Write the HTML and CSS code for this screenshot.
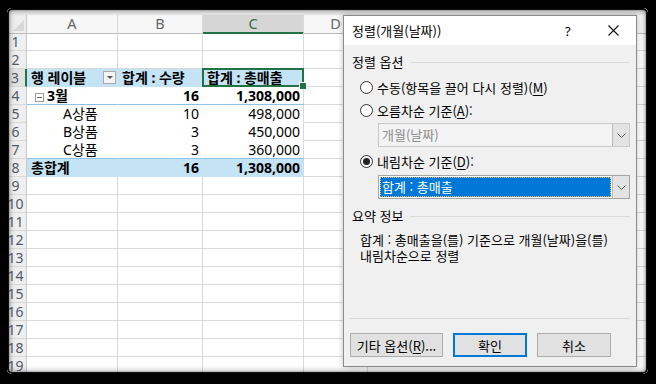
FILE: index.html
```html
<!DOCTYPE html>
<html lang="ko">
<head>
    <meta charset="UTF-8">
    <title>정렬(개월(날짜))</title>
    <link rel="stylesheet" href="styles.css">
</head>
<body>
    <div class="frame">
        <div class="sheet">
            <div class="ribbon-edge"></div>
            <div class="row col-heads">
                <div class="corner"><span class="corner-tri"></span></div>
                <div class="ch">A</div>
                <div class="ch">B</div>
                <div class="ch active">C</div>
                <div class="ch">D</div>
                <div class="ch">E</div>
            </div>
            <div class="row"><div class="rh">1</div><div></div><div></div><div></div><div></div><div></div></div>
            <div class="row"><div class="rh">2</div><div></div><div></div><div></div><div></div><div></div></div>
            <!-- pivot header -->
            <div class="row">
                <div class="rh sel">3</div>
                <div class="pv fill b label-cell">행 레이블<span class="filter-btn"><span class="filter-tri"></span></span></div>
                <div class="pv fill b">합계 : 수량</div>
                <div class="pv fill b last active-cell">합계 : 총매출</div>
                <div></div><div></div>
            </div>
            <div class="row">
                <div class="rh">4</div>
                <div class="pv line b"><span class="collapse-box"></span>3월</div>
                <div class="pv line b num">16</div>
                <div class="pv line b num last">1,308,000</div>
                <div></div><div></div>
            </div>
            <div class="row">
                <div class="rh">5</div>
                <div class="pv item">A상품</div>
                <div class="pv num">10</div>
                <div class="pv num last">498,000</div>
                <div></div><div></div>
            </div>
            <div class="row">
                <div class="rh">6</div>
                <div class="pv item">B상품</div>
                <div class="pv num">3</div>
                <div class="pv num last">450,000</div>
                <div></div><div></div>
            </div>
            <div class="row">
                <div class="rh">7</div>
                <div class="pv line item">C상품</div>
                <div class="pv line num">3</div>
                <div class="pv line num last">360,000</div>
                <div></div><div></div>
            </div>
            <div class="row">
                <div class="rh">8</div>
                <div class="pv fill b">총합계</div>
                <div class="pv fill b num">16</div>
                <div class="pv fill b num last">1,308,000</div>
                <div></div><div></div>
            </div>
            <div class="row"><div class="rh">9</div><div></div><div></div><div></div><div></div><div></div></div>
            <div class="row"><div class="rh">10</div><div></div><div></div><div></div><div></div><div></div></div>
            <div class="row"><div class="rh">11</div><div></div><div></div><div></div><div></div><div></div></div>
            <div class="row"><div class="rh">12</div><div></div><div></div><div></div><div></div><div></div></div>
            <div class="row"><div class="rh">13</div><div></div><div></div><div></div><div></div><div></div></div>
            <div class="row"><div class="rh">14</div><div></div><div></div><div></div><div></div><div></div></div>
            <div class="row"><div class="rh">15</div><div></div><div></div><div></div><div></div><div></div></div>
            <div class="row"><div class="rh">16</div><div></div><div></div><div></div><div></div><div></div></div>
            <div class="row"><div class="rh">17</div><div></div><div></div><div></div><div></div><div></div></div>
            <div class="row"><div class="rh">18</div><div></div><div></div><div></div><div></div><div></div></div>
            <div class="row"><div class="rh">19</div><div></div><div></div><div></div><div></div><div></div></div>
        </div>

        <!-- sort dialog -->
        <div class="dialog">
            <div class="dlg-title">
                <span class="dlg-caption">정렬(개월(날짜))</span>
                <span class="dlg-help">?</span>
                <span class="dlg-close">
                    <svg width="11" height="11" viewBox="0 0 11 11"><path d="M0.5 0.5L10.5 10.5M10.5 0.5L0.5 10.5" stroke="#111" stroke-width="1.1" fill="none"/></svg>
                </span>
            </div>
            <div class="dlg-body">
                <div class="group-label"><span>정렬 옵션</span><span class="group-line"></span></div>
                <div class="radio"><span class="radio-dot"></span>수동(항목을 끌어 다시 정렬)(<u>M</u>)</div>
                <div class="radio"><span class="radio-dot"></span>오름차순 기준(<u>A</u>):</div>
                <div class="combo disabled">
                    <span class="combo-text">개월(날짜)</span>
                    <span class="combo-btn"><svg width="9" height="5" viewBox="0 0 9 5"><path d="M0.5 0.5L4.5 4.5L8.5 0.5" stroke="#555" fill="none"/></svg></span>
                </div>
                <div class="radio r3"><span class="radio-dot checked"></span>내림차순 기준(<u>D</u>):</div>
                <div class="combo">
                    <span class="combo-text selected">합계 : 총매출</span>
                    <span class="combo-btn"><svg width="9" height="5" viewBox="0 0 9 5"><path d="M0.5 0.5L4.5 4.5L8.5 0.5" stroke="#555" fill="none"/></svg></span>
                </div>
                <div class="group-label g2"><span>요약 정보</span><span class="group-line"></span></div>
                <p class="summary">합계 : 총매출을(를) 기준으로 개월(날짜)을(를)</p>
                <p class="summary">내림차순으로 정렬</p>
                <div class="dlg-sep"></div>
                <div class="dlg-buttons">
                    <button class="btn wide">기타 옵션(<u>R</u>)...</button>
                    <button class="btn default">확인</button>
                    <button class="btn">취소</button>
                </div>
            </div>
        </div>
    </div>
</body>
</html>
```

FILE: styles.css
```css
* {
    box-sizing: border-box;
}

html, body {
    margin: 0;
    padding: 0;
}

body {
    background-color: #000;
    width: 656px;
    height: 384px;
    overflow: hidden;
    font-family: "Noto Sans", "Noto Sans CJK KR", sans-serif;
    color: #000;
}

/* torn screenshot edge */
.frame {
    position: relative;
    margin: 8px 0 0 7px;
    width: 641px;
    height: 366px;
    background-color: #fff;
    overflow: hidden;
    border-radius: 5px;
}

.frame::after {
    content: '';
    position: absolute;
    top: 0;
    left: 0;
    right: 0;
    bottom: 0;
    border-radius: 5px;
    box-shadow: inset 0 0 1px 2px #000, inset 0 0 5px 3px rgba(60, 60, 60, 0.45);
    pointer-events: none;
    z-index: 5;
}

/* spreadsheet */
.sheet {
    margin-left: -7px;
}

.ribbon-edge {
    height: 7px;
    background-color: #e9e9e9;
}

.row {
    display: grid;
    grid-template-columns: 27px 91px 85px 101px 64px 1fr;
    height: 18px;
}

.row > div {
    border-right: 1px solid #d9d9d9;
    border-bottom: 1px solid #d9d9d9;
    font-size: 14px;
    line-height: 17px;
    white-space: nowrap;
}

.col-heads > div {
    background-color: #f7f7f7;
    border-bottom-color: #bdbdbd;
    text-align: center;
    color: #666;
    font-size: 14.5px;
}

.col-heads .corner {
    position: relative;
    background-color: #efefef;
    border-right-color: #c8c8c8;
}

.corner-tri {
    position: absolute;
    right: 2px;
    bottom: 2px;
    border-left: 11px solid transparent;
    border-bottom: 11px solid #d7d7d7;
}

.col-heads .ch.active {
    background-color: #d6d6d6;
    border-bottom: 2px solid #217346;
    color: #3a6b50;
}

.row .rh {
    background-color: #efefef;
    border-right-color: #c8c8c8;
    padding-left: 5px;
    text-align: center;
    color: #4f5a6e;
    font-size: 14px;
}

.row .rh.sel {
    background-color: #e1e1e1;
    border-right: 2px solid #217346;
}

/* pivot table */
.row .pv {
    border-right-color: transparent;
    border-bottom-color: transparent;
    padding: 0 4px;
}

.row .pv.last {
    border-right-color: #d9d9d9;
    padding-right: 3px;
}

.row .pv.fill {
    background-color: #c4e3f4;
    border-bottom-color: #c4e3f4;
}

.row .pv.line {
    border-bottom-color: #8ec2e4;
}

.pv.b {
    font-weight: bold;
}

.pv.num {
    text-align: right;
    padding-right: 3px;
}

.pv.item {
    padding-left: 36px;
}

.row .label-cell {
    display: flex;
    align-items: center;
    padding-right: 1px;
}

.filter-btn {
    margin-left: auto;
    width: 13px;
    height: 13px;
    border: 1px solid #a9a9a9;
    background-color: #f4f4f4;
    display: flex;
    align-items: center;
    justify-content: center;
}

.filter-tri {
    border-left: 3px solid transparent;
    border-right: 3px solid transparent;
    border-top: 3px solid #555;
}

.collapse-box {
    display: inline-block;
    width: 9px;
    height: 9px;
    border: 1px solid #9a9a9a;
    margin: 0 3px 0 4px;
    vertical-align: -1px;
    background: linear-gradient(#666, #666) center / 5px 1px no-repeat;
}

.row .active-cell {
    position: relative;
    z-index: 1;
}

.active-cell::before {
    content: '';
    position: absolute;
    top: -1px;
    left: -1px;
    right: -1px;
    bottom: -1px;
    border: 2px solid #217346;
}

.active-cell::after {
    content: '';
    position: absolute;
    right: -4px;
    bottom: -4px;
    width: 6px;
    height: 6px;
    background-color: #217346;
    border: 1px solid #fff;
}

/* sort dialog */
.dialog {
    position: absolute;
    left: 336px;
    top: 7px;
    width: 294px;
    height: 352px;
    border: 1px solid #8c8c8c;
    background-color: #f0f0f0;
    box-shadow: 0 0 6px rgba(0, 0, 0, 0.25);
    z-index: 2;
    display: flex;
    flex-direction: column;
    font-family: "Noto Sans CJK KR", sans-serif;
    font-size: 13px;
}

.dlg-title {
    height: 29px;
    background-color: #fff;
    display: flex;
    align-items: center;
    padding-left: 8px;
}

.dlg-caption {
    flex: 1;
}

.dlg-help {
    width: 10px;
    margin-right: 33px;
    font-family: "Noto Sans", sans-serif;
    font-size: 13px;
}

.dlg-close {
    width: 11px;
    height: 11px;
    margin-right: 17px;
    display: flex;
}

.dlg-body {
    flex: 1;
    display: flex;
    flex-direction: column;
    padding: 9px 6px 9px 8px;
}

.group-label {
    display: flex;
    align-items: center;
    height: 16px;
    line-height: 16px;
    margin-bottom: 6px;
}

.group-label.g2 {
    margin-top: 9px;
    margin-bottom: 8px;
}

.group-line {
    flex: 1;
    margin-left: 7px;
    border-top: 1px solid #dadada;
}

.radio {
    height: 23px;
    display: flex;
    align-items: center;
    padding-left: 8px;
}

.radio.r3 {
    margin-top: 3px;
}

.radio u, .btn u {
    text-decoration: underline;
    text-underline-offset: 2px;
}

.radio-dot {
    width: 13px;
    height: 13px;
    border: 1px solid #333;
    border-radius: 50%;
    background-color: #fff;
    margin-right: 4px;
    display: flex;
    align-items: center;
    justify-content: center;
}

.radio-dot.checked::after {
    content: '';
    width: 7px;
    height: 7px;
    border-radius: 50%;
    background-color: #222;
}

.combo {
    margin: 1px 0 0 26px;
    height: 24px;
    border: 1px solid #a5a5a5;
    background-color: #fff;
    display: flex;
}

.combo + .radio {
    margin-top: 3px;
}

.combo.disabled {
    background-color: #f3f3f3;
    border-color: #c9c9c9;
    color: #8c8c8c;
}

.combo-text {
    flex: 1;
    line-height: 22px;
    padding-left: 3px;
}

.combo-text.selected {
    margin: 1px;
    line-height: 20px;
    padding-left: 2px;
    background-color: #0078d7;
    color: #fff;
    outline: 1px dotted #e9b86b;
    outline-offset: -1px;
}

.combo-btn {
    width: 17px;
    background-color: #e3e3e3;
    border-left: 1px solid #b9b9b9;
    display: flex;
    align-items: center;
    justify-content: center;
}

.combo:not(.disabled) {
    margin-top: 2px;
}

.summary {
    margin: 0;
    padding-left: 8px;
    height: 16px;
    line-height: 16px;
}

.dlg-sep {
    margin: auto 0 0 -2px;
    border-top: 1px solid #d8d8d8;
}

.dlg-buttons {
    display: flex;
    gap: 10px;
    margin: 14px 0 0 -2px;
}

.btn {
    height: 24px;
    width: 74px;
    padding: 0;
    background-color: #e1e1e1;
    border: 1px solid #adadad;
    font-family: "Noto Sans CJK KR", sans-serif;
    font-size: 13px;
    color: #000;
}

.btn.wide {
    width: 93px;
}

.btn.default {
    border: 2px solid #0078d7;
}
```
